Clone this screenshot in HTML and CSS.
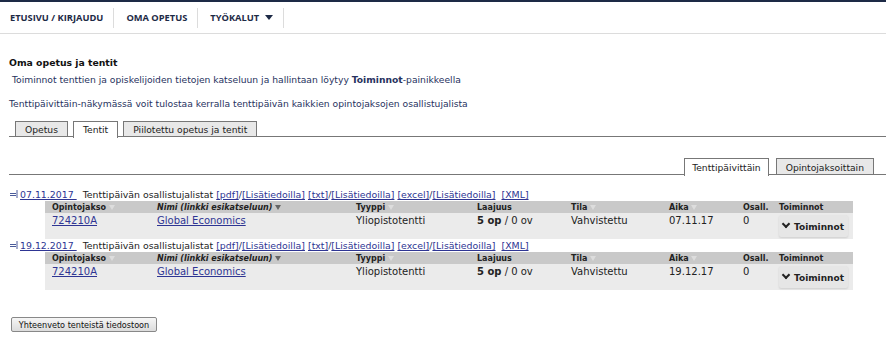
FILE: index.html
```html
<!DOCTYPE html>
<html lang="fi">
<head>
    <meta charset="UTF-8">
    <title>Oma opetus ja tentit</title>
    <link rel="stylesheet" href="styles.css">
</head>
<body>
    <div class="topbar">
        <a class="nav-item" href="#">ETUSIVU / KIRJAUDU</a>
        <a class="nav-item" href="#">OMA OPETUS</a>
        <a class="nav-item" href="#">TYÖKALUT <span class="caret"></span></a>
    </div>
    <div class="content">
        <h1>Oma opetus ja tentit</h1>
        <p class="info">Toiminnot tenttien ja opiskelijoiden tietojen katseluun ja hallintaan löytyy <b>Toiminnot</b>-painikkeella</p>
        <p class="info2">Tenttipäivittäin-näkymässä voit tulostaa kerralla tenttipäivän kaikkien opintojaksojen osallistujalista</p>

        <div class="tabs">
            <span class="tab">Opetus</span>
            <span class="tab active">Tentit</span>
            <span class="tab">Piilotettu opetus ja tentit</span>
        </div>

        <div class="tabs right">
            <span class="tab active">Tenttipäivittäin</span>
            <span class="tab">Opintojaksoittain</span>
        </div>

        <div class="day">
            <div class="day-head">
                <a href="#" class="toggle"><svg width="8" height="8" viewBox="0 0 8 8"><path d="M0 3.5h6M0 5.5h6M7 0v8" stroke="#4a5a9a" stroke-width="1" fill="none"/></svg>07.11.2017 </a>
                <span class="day-label">Tenttipäivän osallistujalistat</span>
                <a href="#">[pdf]</a>/<a href="#">[Lisätiedoilla]</a> <a href="#">[txt]</a>/<a href="#">[Lisätiedoilla]</a> <a href="#">[excel]</a>/<a href="#">[Lisätiedoilla]</a> <a href="#" class="xml">[XML]</a>
            </div>
            <table class="exams">
                <thead>
                    <tr>
                        <th class="c1">Opintojakso <span class="sort"></span></th>
                        <th class="c2"><i>Nimi (linkki esikatseluun)</i> <span class="sort dark"></span></th>
                        <th class="c3">Tyyppi <span class="sort"></span></th>
                        <th class="c4">Laajuus</th>
                        <th class="c5">Tila <span class="sort"></span></th>
                        <th class="c6">Aika <span class="sort"></span></th>
                        <th class="c7">Osall.</th>
                        <th class="c8">Toiminnot</th>
                    </tr>
                </thead>
                <tbody>
                    <tr>
                        <td><a href="#">724210A</a></td>
                        <td><a href="#">Global Economics </a></td>
                        <td>Yliopistotentti</td>
                        <td><b>5 op</b> / 0 ov</td>
                        <td>Vahvistettu</td>
                        <td>07.11.17</td>
                        <td>0</td>
                        <td><button class="actions"><span class="chev"></span>Toiminnot</button></td>
                    </tr>
                </tbody>
            </table>
        </div>

        <div class="day">
            <div class="day-head">
                <a href="#" class="toggle"><svg width="8" height="8" viewBox="0 0 8 8"><path d="M0 3.5h6M0 5.5h6M7 0v8" stroke="#4a5a9a" stroke-width="1" fill="none"/></svg>19.12.2017 </a>
                <span class="day-label">Tenttipäivän osallistujalistat</span>
                <a href="#">[pdf]</a>/<a href="#">[Lisätiedoilla]</a> <a href="#">[txt]</a>/<a href="#">[Lisätiedoilla]</a> <a href="#">[excel]</a>/<a href="#">[Lisätiedoilla]</a> <a href="#" class="xml">[XML]</a>
            </div>
            <table class="exams">
                <thead>
                    <tr>
                        <th class="c1">Opintojakso <span class="sort"></span></th>
                        <th class="c2"><i>Nimi (linkki esikatseluun)</i> <span class="sort dark"></span></th>
                        <th class="c3">Tyyppi <span class="sort"></span></th>
                        <th class="c4">Laajuus</th>
                        <th class="c5">Tila <span class="sort"></span></th>
                        <th class="c6">Aika <span class="sort"></span></th>
                        <th class="c7">Osall.</th>
                        <th class="c8">Toiminnot</th>
                    </tr>
                </thead>
                <tbody>
                    <tr>
                        <td><a href="#">724210A</a></td>
                        <td><a href="#">Global Economics </a></td>
                        <td>Yliopistotentti</td>
                        <td><b>5 op</b> / 0 ov</td>
                        <td>Vahvistettu</td>
                        <td>19.12.17</td>
                        <td>0</td>
                        <td><button class="actions"><span class="chev"></span>Toiminnot</button></td>
                    </tr>
                </tbody>
            </table>
        </div>

        <button class="summary">Yhteenveto tenteistä tiedostoon</button>
    </div>
</body>
</html>
```

FILE: styles.css
```css
body {
    margin: 0;
    font-family: "DejaVu Sans", Verdana, sans-serif;
    font-size: 9.2px;
    color: #27325e;
    background: #fff;
}
a {
    color: #2e3593;
}
.topbar {
    border-top: 2px solid #1d2a46;
    border-bottom: 1px solid #dcdcdc;
    height: 31px;
    display: flex;
    align-items: center;
}
.nav-item {
    font-family: "Open Sans", sans-serif;
    font-weight: bold;
    font-size: 9.3px;
    color: #1d2a46;
    text-decoration: none;
    padding: 0 10px 0 12px;
    height: 20px;
    display: flex;
    align-items: center;
    border-right: 1px solid #dcdcdc;
}
.nav-item:first-child {
    padding-left: 10px;
}
.caret {
    display: inline-block;
    margin-left: 6px;
    border-left: 4px solid transparent;
    border-right: 4px solid transparent;
    border-top: 5px solid #1d2a46;
}
.content {
    padding: 0 0 0 9px;
}
h1 {
    font-size: 9.3px;
    color: #111;
    margin: 23px 0 0;
}
.info {
    margin: 6px 0 0 3px;
}
.info2 {
    margin: 13px 0 0;
}
.tabs {
    display: flex;
    gap: 5px;
    padding-left: 6px;
    border-bottom: 1px solid #777;
    margin-top: 12px;
    height: 15px;
}
.tabs.right {
    justify-content: flex-end;
    padding-right: 12px;
    margin-top: 21px;
    gap: 7px;
    height: 16px;
}
.tab {
    border: 1px solid #777;
    border-bottom: none;
    background: #e8e8e8;
    padding: 1px 9px 0;
    line-height: 13px;
    color: #222;
}
.tab.active {
    background: #fff;
    height: 15px;
}
.tabs.right .tab {
    padding: 2px 9px 0;
}
.tabs.right .tab.active {
    padding: 2px 7px 0;
}
.day {
    margin-top: 13px;
}
.day + .day {
    margin-top: 0;
}
.day-head {
    font-size: 9.4px;
    line-height: 13px;
    padding-left: 1px;
}
.toggle svg {
    margin-right: 2px;
}
.day-label {
    margin-left: 6px;
    color: #222;
}
.xml {
    margin-left: 3px;
}
.exams {
    margin-left: 36px;
    width: 808px;
    border-collapse: collapse;
    background: #ebebeb;
    color: #222;
    font-size: 10px;
}
.exams th {
    background: #c9c9c9;
    font-size: 8px;
    text-align: left;
    padding: 2px 0 1px 7px;
    height: 9px;
}
.exams td {
    padding: 2px 0 0 7px;
    vertical-align: top;
    height: 24px;
}
.sort {
    display: inline-block;
    border-left: 3px solid transparent;
    border-right: 3px solid transparent;
    border-top: 5px solid #ddd;
}
.sort.dark {
    border-top-color: #666;
}
.c1 { width: 98px; }
.c2 { width: 192px; }
.c3 { width: 114px; }
.c4 { width: 87px; }
.c5 { width: 91px; }
.c6 { width: 67px; }
.c7 { width: 29px; }
.actions {
    font-family: "DejaVu Sans", Verdana, sans-serif;
    font-weight: bold;
    font-size: 9px;
    color: #222;
    background: #e6e6e6;
    border: none;
    border-radius: 2px;
    box-shadow: 0 1px 2px rgba(0,0,0,0.12);
    height: 22px;
    width: 69px;
    padding: 0;
}
.chev {
    display: inline-block;
    width: 4px;
    height: 4px;
    border-right: 2px solid #222;
    border-bottom: 2px solid #222;
    transform: rotate(45deg);
    margin: 0 5px 3px 0;
}
.summary {
    font-family: "DejaVu Sans Condensed", "DejaVu Sans", sans-serif;
    font-size: 9px;
    color: #111;
    margin: 27px 0 0 2px;
    height: 15px;
    width: 146px;
    padding: 0;
    border: 1px solid #888;
    border-radius: 2px;
    background: linear-gradient(#f6f6f6, #dcdcdc);
}
```
